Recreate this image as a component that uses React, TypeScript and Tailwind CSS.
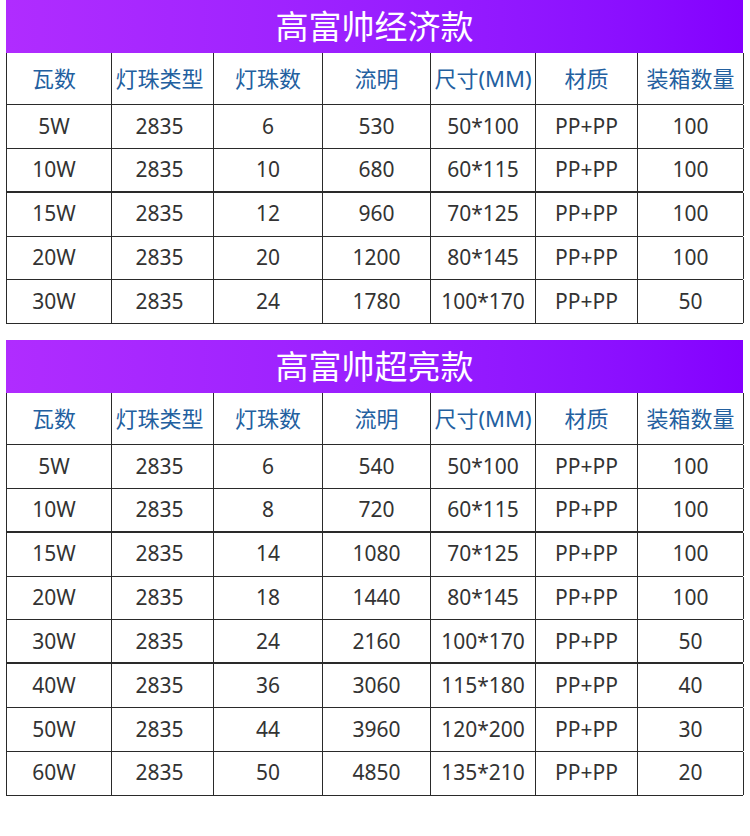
const HEADERS = ['瓦数', '灯珠类型', '灯珠数', '流明', '尺寸(MM)', '材质', '装箱数量']

const ECONOMY_ROWS = [
  ['5W', '2835', '6', '530', '50*100', 'PP+PP', '100'],
  ['10W', '2835', '10', '680', '60*115', 'PP+PP', '100'],
  ['15W', '2835', '12', '960', '70*125', 'PP+PP', '100'],
  ['20W', '2835', '20', '1200', '80*145', 'PP+PP', '100'],
  ['30W', '2835', '24', '1780', '100*170', 'PP+PP', '50'],
]

const BRIGHT_ROWS = [
  ['5W', '2835', '6', '540', '50*100', 'PP+PP', '100'],
  ['10W', '2835', '8', '720', '60*115', 'PP+PP', '100'],
  ['15W', '2835', '14', '1080', '70*125', 'PP+PP', '100'],
  ['20W', '2835', '18', '1440', '80*145', 'PP+PP', '100'],
  ['30W', '2835', '24', '2160', '100*170', 'PP+PP', '50'],
  ['40W', '2835', '36', '3060', '115*180', 'PP+PP', '40'],
  ['50W', '2835', '44', '3960', '120*200', 'PP+PP', '30'],
  ['60W', '2835', '50', '4850', '135*210', 'PP+PP', '20'],
]

const GRID_COLS = 'grid grid-cols-[105px_102px_109px_108px_105px_102px_106px]'

// the first columns sit a little left of centre in the original
const CELL_SHIFT = ['pr-[10px]', 'pr-[6px]', '', '', '', '', '']

export default function App(): JSX.Element {
  return (
    <div className="h-[836px] w-[750px] bg-white pl-[6px] pr-[7px] font-['Noto_Sans','Noto_Sans_CJK_SC',sans-serif]">
      <SpecTable title="高富帅经济款" rows={ECONOMY_ROWS} heavyAfter={[1]} />
      <div className="h-[16px]" />
      <SpecTable title="高富帅超亮款" rows={BRIGHT_ROWS} heavyAfter={[1, 4]} />
    </div>
  )
}

interface ISpecTableProps {
  title: string
  rows: string[][]
  heavyAfter: number[]
}

function SpecTable({ title, rows, heavyAfter }: ISpecTableProps): JSX.Element {
  return (
    <section>
      <div className="flex h-[53px] items-center justify-center bg-gradient-to-r from-[#b02cff] to-[#8400ff] text-[33px] leading-none text-white">
        {title}
      </div>
      <div className="border-l border-[#2a2a2a]">
        <div className={`${GRID_COLS} h-[52px] border-b border-[#2a2a2a]`}>
          {HEADERS.map((header, cellIndex) => (
            <div
              key={header}
              className={`flex items-center justify-center border-r border-[#2a2a2a] text-[22px] text-[#23609f] ${CELL_SHIFT[cellIndex]}`}
            >
              {header}
            </div>
          ))}
        </div>
        {rows.map((row, index) => (
          <div
            key={row[0]}
            className={`${GRID_COLS} ${
              heavyAfter.includes(index) ? 'h-[44px] border-b-2' : 'h-[43.75px] border-b'
            } border-[#2a2a2a]`}
          >
            {row.map((cell, cellIndex) => (
              <div
                key={cellIndex}
                className={`flex items-center justify-center border-r border-[#2a2a2a] text-[21px] text-[#333333] ${CELL_SHIFT[cellIndex]}`}
              >
                {cell}
              </div>
            ))}
          </div>
        ))}
      </div>
    </section>
  )
}
